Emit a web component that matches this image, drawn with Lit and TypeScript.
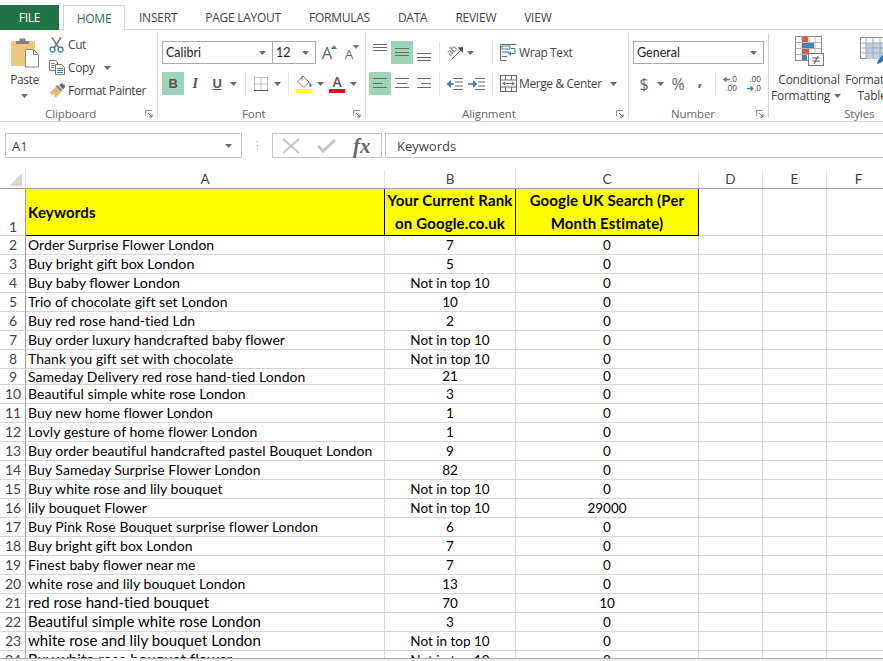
import { LitElement, html, css, svg } from "lit";
import { customElement } from "lit/decorators.js";

type Row = { n: number; k: string; r: string; s: string; size?: string };

const rows: Row[] = [
  { n: 2, k: "Order Surprise Flower London", r: "7", s: "0" },
  { n: 3, k: "Buy bright gift box London", r: "5", s: "0", size: "m" },
  { n: 4, k: "Buy baby flower London", r: "Not in top 10", s: "0", size: "m" },
  { n: 5, k: "Trio of chocolate gift set London", r: "10", s: "0" },
  { n: 6, k: "Buy red rose hand-tied Ldn", r: "2", s: "0" },
  { n: 7, k: "Buy order luxury handcrafted baby flower", r: "Not in top 10", s: "0" },
  { n: 8, k: "Thank you gift set with chocolate", r: "Not in top 10", s: "0" },
  { n: 9, k: "Sameday Delivery red rose hand-tied London", r: "21", s: "0" },
  { n: 10, k: "Beautiful simple white rose London", r: "3", s: "0" },
  { n: 11, k: "Buy new home flower London", r: "1", s: "0" },
  { n: 12, k: "Lovly gesture of home flower London", r: "1", s: "0" },
  { n: 13, k: "Buy order beautiful handcrafted pastel Bouquet London", r: "9", s: "0" },
  { n: 14, k: "Buy Sameday Surprise Flower London", r: "82", s: "0" },
  { n: 15, k: "Buy white rose and lily bouquet", r: "Not in top 10", s: "0" },
  { n: 16, k: "lily bouquet Flower", r: "Not in top 10", s: "29000" },
  { n: 17, k: "Buy Pink Rose Bouquet surprise flower London", r: "6", s: "0" },
  { n: 18, k: "Buy bright gift box London", r: "7", s: "0" },
  { n: 19, k: "Finest baby flower near me", r: "7", s: "0" },
  { n: 20, k: "white rose and lily bouquet London", r: "13", s: "0" },
  { n: 21, k: "red rose hand-tied bouquet", r: "70", s: "10", size: "l" },
  { n: 22, k: "Beautiful simple white rose London", r: "3", s: "0", size: "l" },
  { n: 23, k: "white rose and lily bouquet London", r: "Not in top 10", s: "0", size: "l" },
  { n: 24, k: "Buy white rose bouquet flower", r: "Not in top 10", s: "0", size: "l" },
];

const caret = () => html`<span class="caret"><svg width="7" height="4" viewBox="0 0 7 4"><path d="M0 0h7L3.5 4z" fill="#6a6a6a"/></svg></span>`;
const launcher = () => html`<svg class="launch" width="8" height="8" viewBox="0 0 8 8"><path d="M0.5 6V0.5H7" fill="none" stroke="#8a8a8a"/><path d="M3 3l4 4M7 4v3H4" fill="none" stroke="#6a6a6a"/></svg>`;

/* Horizontal rule icons: each bar is [x1, x2, y]. */
const bars = (list: number[][]) => html`<svg width="16" height="18" viewBox="0 0 16 18">${list.map(
  ([a, b, y]) => svg`<path d="M${a} ${y + 0.5}H${b}" stroke="#6a6a6a"/>`
)}</svg>`;

const iconPaste = html`<svg width="30" height="30" viewBox="0 0 30 30">
  <rect x="1" y="3" width="24" height="25" rx="1" fill="#edc87e"/>
  <path d="M6 6V3h3.5V0.5h6V3H19v3z" fill="#7f7f7f"/>
  <path d="M15.5 11.5h8l5 5v12.5h-13z" fill="#fff" stroke="#8a8a8a"/>
  <path d="M23.5 11.5v5h5" fill="none" stroke="#8a8a8a"/>
</svg>`;
const iconCut = html`<svg width="15" height="16" viewBox="0 0 15 16">
  <path d="M3 0.5l6.5 10M12 0.5l-6.5 10" stroke="#777" stroke-width="1.5" fill="none"/>
  <circle cx="3.5" cy="12.5" r="2.5" fill="none" stroke="#3f7fbf" stroke-width="1.3"/>
  <circle cx="11.5" cy="12.5" r="2.5" fill="none" stroke="#3f7fbf" stroke-width="1.3"/>
</svg>`;
const iconCopy = html`<svg width="16" height="15" viewBox="0 0 16 15">
  <path d="M0.5 0.5h6l2 2v8h-8z" fill="#fff" stroke="#777"/>
  <path d="M2 3.5h4M2 5.5h4M2 7.5h3" stroke="#888"/>
  <path d="M6.5 4.5h6l3 3v7h-9z" fill="#fff" stroke="#777"/>
  <path d="M8 8.5h6M8 10.5h6M8 12.5h6" stroke="#3f7fbf"/>
</svg>`;
const iconBrush = html`<svg width="17" height="15" viewBox="0 0 17 15">
  <path d="M0.5 9.5L7 4l5 5-5 5.5-2-1.5 1-2-2.5 1z" fill="#e8b96f"/>
  <path d="M6.5 3.5l2-1.5 5 5-1.5 2z" fill="#8a8a8a"/>
  <path d="M10 2l3-2 3.5 3.5-2.5 3z" fill="#6a6a6a"/>
</svg>`;
const iconBorders = html`<svg width="14" height="14" viewBox="0 0 14 14">
  <path d="M0.5 0.5h13M0.5 7h13M0.5 13.5h13M0.5 0.5v13M7 0.5v13M13.5 0.5v13" stroke="#8a8a8a" stroke-dasharray="1 1" fill="none"/>
  <path d="M0 13.5h14" stroke="#555"/>
</svg>`;
const iconFill = html`<svg width="17" height="18" viewBox="0 0 17 18">
  <path d="M7 1l6 6-5 5.5-6-6z" fill="#fff" stroke="#7a7a7a"/>
  <path d="M6 0.5v5" stroke="#7a7a7a"/>
  <path d="M13.5 7c1.5 1.5 2.5 3 2 4.5-1 0.8-2.5 0-2.5-1.5z" fill="#3f7fbf"/>
  <rect x="0" y="14" width="16" height="4" fill="#ffff00"/>
</svg>`;
const iconOrient = html`<svg class="vis" width="17" height="17" viewBox="0 0 17 17">
  <text x="2" y="11" transform="rotate(-45 5 9)" font-family="Open Sans, sans-serif" font-size="9.500" fill="#666">ab</text>
  <path d="M5.5 15.5L15 6" stroke="#666" fill="none"/>
  <path d="M17 3v6l-5.500-5.500z" fill="#555"/>
</svg>`;
const iconWrap = html`<svg width="17" height="17" viewBox="0 0 17 17">
  <path d="M0.5 0.5h16M0.5 16.500h6M0.5 0.500v16" stroke="#666" fill="none"/>
  <path d="M2 8h7M2 12.500h5" stroke="#666"/>
  <rect x="2" y="2" width="8" height="3" fill="none" stroke="#3f7fbf"/>
  <path d="M11 4.500h4v5h-6" stroke="#3f7fbf" fill="none"/>
  <path d="M11 7l-3 2.500 3 2.500z" fill="#3f7fbf"/>
</svg>`;
const iconMerge = html`<svg width="17" height="17" viewBox="0 0 17 17">
  <rect x="0.500" y="0.500" width="16" height="16" fill="#fff" stroke="#666"/>
  <path d="M0.500 5h16M0.500 12h16M5.500 0.500V5M11.500 0.500V5M5.500 12v4.500M11.500 12v4.500" stroke="#666"/>
  <path d="M3 8.500h11" stroke="#3f7fbf"/>
  <path d="M5 6.500l-3 2 3 2zM12 6.500l3 2-3 2z" fill="#3f7fbf"/>
</svg>`;
const iconOutdent = html`<svg width="17" height="12" viewBox="0 0 17 12">
  <path d="M7 0.500h10M9 4h8M9 8h8M7 11.500h10" stroke="#666"/>
  <path d="M2 6h6" stroke="#3f7fbf" stroke-width="1.600"/>
  <path d="M5 2L0.500 6 5 10z" fill="#3f7fbf"/>
</svg>`;
const iconIndent = html`<svg width="17" height="12" viewBox="0 0 17 12">
  <path d="M7 0.500h10M10 4h7M10 8h7M7 11.500h10" stroke="#666"/>
  <path d="M0 6h6" stroke="#3f7fbf" stroke-width="1.600"/>
  <path d="M5 2l4.500 4L5 10z" fill="#3f7fbf"/>
</svg>`;
const arrowL = html`<svg width="7" height="7" viewBox="0 0 7 7"><path d="M2 3.500h5" stroke="#3f7fbf" stroke-width="1.500"/><path d="M3.500 0.500L0 3.500l3.500 3z" fill="#3f7fbf"/></svg>`;
const arrowR = html`<svg width="7" height="7" viewBox="0 0 7 7"><path d="M0 3.500h5" stroke="#3f7fbf" stroke-width="1.500"/><path d="M3.500 0.500l3.500 3-3.500 3z" fill="#3f7fbf"/></svg>`;
const iconCond = html`<svg width="30" height="31" viewBox="0 0 30 31">
  <rect x="1.500" y="1.500" width="26" height="24" fill="#fff" stroke="#8a8a8a"/>
  <path d="M1.500 7.500h26M1.500 13.500h26M1.500 19.500h26M8 1.500v24M15 1.500v24M21 1.500v24" stroke="#b5b5b5"/>
  <rect x="8" y="2" width="6" height="5" fill="#d3603c"/>
  <rect x="8" y="8" width="12" height="5" fill="#4a80b8"/>
  <rect x="8" y="14" width="7" height="5" fill="#d3603c"/>
  <rect x="8" y="20" width="5" height="5" fill="#4a80b8"/>
  <rect x="14.500" y="18.500" width="15" height="12" fill="#fff" stroke="#777"/>
  <path d="M18.500 23h7M18.500 26h7M24 21l-4 8" stroke="#555" fill="none"/>
</svg>`;
const iconTable = html`<svg width="30" height="30" viewBox="0 0 30 30">
  <rect x="0.500" y="2.500" width="26" height="21" fill="#fff" stroke="#8a8a8a"/>
  <rect x="6" y="8" width="24" height="16" fill="#bdd0e9"/>
  <path d="M0.500 8h30M0.500 13h30M0.500 18h30M6 2.500v21M13 2.500v21M20 2.500v21" stroke="#a8a8a8"/>
  <path d="M20 23l7-8 3 3-7 8c-2 2-5 3-6 3 0-2 1-4 3-6z" fill="#2f75b5"/>
  <path d="M25 15l3-3 2 2v3z" fill="#777"/>
</svg>`;

@customElement("app-root")
export class AppRoot extends LitElement {
  static styles = css`
    :host {
      display: block;
      width: 883px;
      height: 661px;
      overflow: hidden;
      background: #fff;
      font-family: "Open Sans", "Noto Sans", sans-serif;
      color: #444;
    }
    * { box-sizing: border-box; }
    svg { display: block; flex: none; }
    svg.vis { overflow: visible; }

    /* tabs */
    .tabs {
      display: flex;
      height: 30px;
      padding-top: 5px;
      border-bottom: 1px solid #d4d4d4;
      font-size: 12px;
      letter-spacing: -0.25px;
    }
    .tab { height: 24px; padding: 0 14px; display: flex; align-items: center; white-space: nowrap; }
    .file { width: 59px; height: 25px; padding: 0; justify-content: center; background: #217346; color: #fff; margin-right: 4px; }
    .home {
      width: 62px;
      height: 25px;
      padding: 0;
      justify-content: center;
      border: 1px solid #d4d4d4;
      border-bottom: none;
      background: #fff;
      color: #217346;
    }

    /* ribbon */
    .ribbon {
      display: flex;
      height: 92px;
      padding-top: 3px;
      border-bottom: 1px solid #d4d4d4;
      font-size: 12px;
      letter-spacing: -0.4px;
      overflow: hidden;
    }
    .group {
      flex: none;
      height: 88px;
      display: flex;
      flex-direction: column;
      background: linear-gradient(#d4d4d4, #d4d4d4) right top / 1px 85px no-repeat;
    }
    .g-clip { width: 158px; }
    .g-font { width: 208px; }
    .g-align { width: 263px; }
    .g-num { width: 140px; }
    .g-styles { width: 130px; background: none; }
    .gbody { flex: 1; padding-top: 8px; display: flex; flex-direction: column; gap: 8px; }
    .g-font .gbody, .g-num .gbody { padding-left: 4px; }
    .g-align .gbody { padding-left: 3px; }
    .glabel {
      height: 14px;
      display: grid;
      align-items: center;
      color: #666;
      font-size: 11.5px;
      letter-spacing: -0.1px;
      line-height: 14px;
      padding-right: 5px;
    }
    .g-clip .glabel { grid-template-columns: 45px auto 1fr; }
    .g-font .glabel { grid-template-columns: 84px auto 1fr; }
    .g-align .glabel { grid-template-columns: 96px auto 1fr; }
    .g-num .glabel { grid-template-columns: 42px auto 1fr; }
    .g-styles .glabel { grid-template-columns: 75px auto 1fr; }
    .glabel span { grid-column: 2; }
    .launch { grid-column: 3; justify-self: end; }

    .tr { display: flex; align-items: center; height: 23px; }
    .btn { flex: none; width: 22px; height: 23px; display: flex; align-items: center; justify-content: center; }
    .on { background: #9fd5b7; }
    .caret { flex: none; width: 11px; display: flex; justify-content: center; }
    .vsep { flex: none; width: 1px; height: 22px; background: #e1e1e1; }
    .ml1 { margin-left: 1px; }
    .ml2 { margin-left: 2px; }
    .ml3 { margin-left: 3px; }
    .ml4 { margin-left: 4px; }
    .ml5 { margin-left: 5px; }
    .ml6 { margin-left: 6px; }
    .ml7 { margin-left: 7px; }
    .ml16 { margin-left: 16px; }

    .combo {
      flex: none;
      height: 23px;
      border: 1px solid #ababab;
      display: flex;
      align-items: center;
      justify-content: space-between;
      padding: 0 4px 0 3px;
      color: #222;
      background: #fff;
      letter-spacing: 0;
    }
    .cb-name { width: 111px; font-family: "Lato", sans-serif; font-size: 12.5px; }
    .cb-size { width: 44px; margin-left: -1px; font-family: "Lato", sans-serif; font-size: 12.5px; }
    .cb-num { width: 131px; font-family: "Lato", sans-serif; font-size: 12.5px; }

    /* clipboard */
    .clip { flex: 1; display: flex; }
    .paste { width: 49px; flex: none; display: flex; flex-direction: column; align-items: center; padding-top: 5px; }
    .paste .t { margin-top: 4px; line-height: 15px; }
    .paste .caret { margin-top: 7px; }
    .cliprows { display: flex; flex-direction: column; padding-top: 0; }
    .cr { height: 23px; display: flex; align-items: center; white-space: nowrap; }
    .cr .ic { width: 19px; flex: none; display: flex; justify-content: flex-start; }

    /* text glyph buttons */
    .bb { font-family: "Liberation Sans", sans-serif; font-weight: 700; font-size: 13px; color: #555; }
    .ii { font-family: "Liberation Serif", serif; font-style: italic; font-weight: 700; font-size: 14px; color: #555; }
    .uu { font-family: "Liberation Sans", sans-serif; font-weight: 700; font-size: 13px; color: #555; text-decoration: underline; }
    .glyphA { font-size: 16.5px; color: #666; position: relative; display: flex; width: 22px; height: 23px; align-items: center; justify-content: center; letter-spacing: 0; }
    .glyphA.small { font-size: 13.5px; padding-top: 2px; }
    .tri { position: absolute; right: 1px; top: 4px; }
    .fcolor { display: flex; flex-direction: column; align-items: center; width: 17px; }
    .fcolor .a { font-size: 14px; font-weight: 600; line-height: 14px; color: #555; }
    .fcolor .red { width: 16px; height: 4px; background: #ff0000; }
    .bigsym { font-size: 16px; color: #666; letter-spacing: 0; }
    .comma { font-weight: 700; padding-bottom: 7px; }
    .dec { display: flex; flex-direction: column; align-items: flex-end; width: 16px; font-size: 8.5px; line-height: 9px; color: #555; letter-spacing: 0; font-family: "Liberation Sans", sans-serif; }
    .dl { display: flex; align-items: center; height: 9px; }
    .lab { margin-left: 2px; white-space: nowrap; color: #444; }

    /* styles */
    .sty { flex: 1; display: flex; padding: 2px 0 0 7px; letter-spacing: -0.25px; }
    .stycol { flex: none; display: flex; flex-direction: column; align-items: center; line-height: 16px; white-space: nowrap; }
    .stycol .pic { height: 37px; }
    .pic.shift { margin-left: 6px; }
    .c1 { width: 66px; }
    .c2 { width: 50px; margin-left: 5px; }
    .l2 { display: flex; align-items: center; gap: 2px; margin-left: -4px; }

    /* formula bar */
    .fbar { height: 48px; padding-top: 11px; display: flex; align-items: flex-start; font-size: 13px; }
    .box { height: 25px; border: 1px solid #c6c6c6; display: flex; align-items: center; flex: none; }
    .namebox { width: 237px; margin-left: 5px; padding: 0 7px 0 6px; justify-content: space-between; color: #444; }
    .dots { width: 30px; flex: none; height: 25px; display: flex; align-items: center; justify-content: center; }
    .fxbox { width: 110px; padding-left: 9px; gap: 17px; }
    .fx { font-family: "Liberation Serif", serif; font-style: italic; font-weight: 700; font-size: 21px; color: #666; line-height: 22px; }
    .input { flex: 1; margin-left: 3px; margin-right: -2px; padding-left: 11px; color: #444; }

    /* sheet */
    .sheet { height: 488px; overflow: hidden; font-family: "Lato", "Open Sans", sans-serif; color: #000; }
    .row {
      display: grid;
      grid-template-columns: 26px 359px 131px 183px 64px 64px 64px;
      width: 891px;
      height: 19px;
    }
    .row.short { height: 16px; }
    .row.hd { height: 19px; }
    .row.one { height: 47px; }
    .c {
      border-right: 1px solid #d4d4d4;
      border-bottom: 1px solid #d4d4d4;
      display: flex;
      align-items: center;
      white-space: nowrap;
      overflow: hidden;
      font-size: 14px;
      padding-bottom: 1px;
    }
    .left { padding-left: 2px; letter-spacing: 0.05px; }
    .mid { justify-content: center; font-size: 13.5px; }
    .rh {
      border-right: 1px solid #9e9e9e;
      justify-content: center;
      color: #444;
      font-size: 14px;
      padding-left: 1px;
    }
    .hd .c {
      border-bottom: 1px solid #9e9e9e;
      border-right-color: #e3e3e3;
      justify-content: center;
      color: #444;
      font-size: 13.5px;
      padding-bottom: 0;
    }
    .corner { align-items: flex-end; justify-content: flex-end !important; padding: 0 3px 2px 0 !important; }
    .one .y {
      background: #ffff00;
      border-right: 1px solid #000;
      border-bottom: 1px solid #000;
      font-weight: 700;
      font-size: 15px;
      letter-spacing: 0.15px;
      line-height: 23px;
      white-space: normal;
      text-align: center;
      justify-content: center;
      padding: 0 1px;
    }
    .one .y.left { justify-content: flex-start; padding: 0 0 0 2px; }
    .one .rh { align-items: flex-end; line-height: 16px; padding-bottom: 0; }
    .m { font-size: 14.3px; letter-spacing: 0; }
    .l { font-size: 15px; letter-spacing: 0.05px; padding-bottom: 3px; }

    .strip {
      height: 3px;
      background: #f0f0f0;
      border-top: 1px solid #ababab;
      display: flex;
    }
    .sheettab { width: 41px; margin-left: 100px; margin-top: -1px; height: 4px; background: #fff; border-left: 1px solid #ababab; border-right: 1px solid #ababab; }
  `;

  render() {
    return html`
      <div class="tabs">
        <div class="tab file">FILE</div>
        <div class="tab home">HOME</div>
        <div class="tab">INSERT</div>
        <div class="tab">PAGE LAYOUT</div>
        <div class="tab">FORMULAS</div>
        <div class="tab">DATA</div>
        <div class="tab">REVIEW</div>
        <div class="tab">VIEW</div>
      </div>

      <div class="ribbon">
        <section class="group g-clip">
          <div class="clip">
            <div class="paste">
              ${iconPaste}
              <div class="t">Paste</div>
              ${caret()}
            </div>
            <div class="cliprows">
              <div class="cr"><span class="ic">${iconCut}</span>Cut</div>
              <div class="cr"><span class="ic">${iconCopy}</span>Copy<span class="ml7">${caret()}</span></div>
              <div class="cr"><span class="ic">${iconBrush}</span>Format Painter</div>
            </div>
          </div>
          <div class="glabel"><span>Clipboard</span>${launcher()}</div>
        </section>

        <section class="group g-font">
          <div class="gbody">
            <div class="tr">
              <div class="combo cb-name">Calibri ${caret()}</div>
              <div class="combo cb-size">12 ${caret()}</div>
              <div class="glyphA">A<svg class="tri" width="6" height="4" viewBox="0 0 6 4"><path d="M3 0l3 4H0z" fill="#3f7fbf"/></svg></div>
              <div class="glyphA small">A<svg class="tri" width="6" height="4" viewBox="0 0 6 4"><path d="M3 4L0 0h6z" fill="#3f7fbf"/></svg></div>
            </div>
            <div class="tr">
              <div class="btn on bb">B</div>
              <div class="btn ii">I</div>
              <div class="btn uu">U</div>
              ${caret()}
              <div class="vsep ml6"></div>
              <div class="btn ml4">${iconBorders}</div>
              ${caret()}
              <div class="vsep ml5"></div>
              <div class="btn ml4">${iconFill}</div>
              ${caret()}
              <div class="btn"><div class="fcolor"><span class="a">A</span><span class="red"></span></div></div>
              ${caret()}
            </div>
          </div>
          <div class="glabel"><span>Font</span>${launcher()}</div>
        </section>

        <section class="group g-align">
          <div class="gbody">
            <div class="tr">
              <div class="btn">${bars([[1, 15, 0], [1, 15, 3], [1, 15, 6]])}</div>
              <div class="btn on">${bars([[1, 15, 4], [1, 15, 8], [1, 15, 11]])}</div>
              <div class="btn">${bars([[1, 15, 9], [1, 15, 13], [1, 15, 16]])}</div>
              <div class="vsep ml4"></div>
              <div class="btn ml3">${iconOrient}</div>
              ${caret()}
              <div class="vsep ml16"></div>
              <div class="ml7">${iconWrap}</div>
              <div class="lab">Wrap Text</div>
            </div>
            <div class="tr">
              <div class="btn on">${bars([[1, 15, 3], [1, 11, 8], [1, 15, 12]])}</div>
              <div class="btn">${bars([[1, 15, 3], [3, 13, 8], [1, 15, 12]])}</div>
              <div class="btn">${bars([[1, 15, 3], [5, 15, 8], [1, 15, 12]])}</div>
              <div class="vsep ml4"></div>
              <div class="btn ml3">${iconOutdent}</div>
              <div class="btn">${iconIndent}</div>
              <div class="vsep ml5"></div>
              <div class="ml7">${iconMerge}</div>
              <div class="lab">Merge &amp; Center</div>
              <span class="ml6">${caret()}</span>
            </div>
          </div>
          <div class="glabel"><span>Alignment</span>${launcher()}</div>
        </section>

        <section class="group g-num">
          <div class="gbody">
            <div class="tr"><div class="combo cb-num">General ${caret()}</div></div>
            <div class="tr">
              <div class="btn bigsym">$</div>
              ${caret()}
              <div class="btn ml1 bigsym">%</div>
              <div class="btn bigsym comma">,</div>
              <div class="vsep ml4"></div>
              <div class="btn ml2"><div class="dec"><span class="dl">${arrowL}<span>.0</span></span><span class="dl">.00</span></div></div>
              <div class="btn ml2"><div class="dec"><span class="dl">.00</span><span class="dl">${arrowR}<span>.0</span></span></div></div>
            </div>
          </div>
          <div class="glabel"><span>Number</span>${launcher()}</div>
        </section>

        <section class="group g-styles">
          <div class="sty">
            <div class="stycol c1">
              <div class="pic">${iconCond}</div>
              <div>Conditional</div>
              <div class="l2">Formatting ${caret()}</div>
            </div>
            <div class="stycol c2">
              <div class="pic shift">${iconTable}</div>
              <div>Format as</div>
              <div>Table</div>
            </div>
          </div>
          <div class="glabel"><span>Styles</span></div>
        </section>
      </div>

      <div class="fbar">
        <div class="box namebox">A1 ${caret()}</div>
        <div class="dots"><svg width="3" height="11" viewBox="0 0 3 11"><path d="M1 1h1v1H1zM1 5h1v1H1zM1 9h1v1H1z" fill="#888"/></svg></div>
        <div class="box fxbox">
          <svg width="18" height="16" viewBox="0 0 18 16"><path d="M1 1l16 14M17 1L1 15" stroke="#c6c6c6" stroke-width="2"/></svg>
          <svg width="19" height="15" viewBox="0 0 19 15"><path d="M1 8l5 5L18 2" fill="none" stroke="#c6c6c6" stroke-width="3"/></svg>
          <span class="fx">fx</span>
        </div>
        <div class="box input">Keywords</div>
      </div>

      <div class="sheet">
        <div class="row hd">
          <div class="c corner"><svg width="13" height="13" viewBox="0 0 13 13"><path d="M13 0v13H0z" fill="#d6d6d6"/></svg></div>
          <div class="c">A</div><div class="c">B</div><div class="c">C</div>
          <div class="c">D</div><div class="c">E</div><div class="c">F</div>
        </div>
        <div class="row one">
          <div class="c rh">1</div>
          <div class="c y left">Keywords</div>
          <div class="c y">Your Current Rank on Google.co.uk</div>
          <div class="c y">Google UK Search (Per Month Estimate)</div>
          <div class="c"></div><div class="c"></div><div class="c"></div>
        </div>
        ${rows.map(
          (r) => html`
            <div class="row ${r.n === 9 ? "short" : ""}">
              <div class="c rh">${r.n}</div>
              <div class="c left ${r.size ?? ""}">${r.k}</div>
              <div class="c mid">${r.r}</div>
              <div class="c mid">${r.s}</div>
              <div class="c"></div><div class="c"></div><div class="c"></div>
            </div>
          `
        )}
      </div>
      <div class="strip"><div class="sheettab"></div></div>
    `;
  }
}
